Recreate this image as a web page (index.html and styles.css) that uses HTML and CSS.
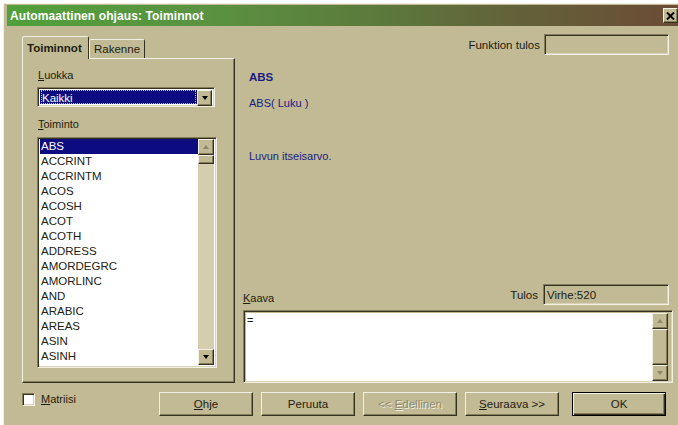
FILE: index.html
```html
<!DOCTYPE html>
<html lang="fi">
<head>
<meta charset="utf-8">
<title>Automaattinen ohjaus: Toiminnot</title>
<link rel="stylesheet" href="styles.css">
</head>
<body>
<div class="window">
  <div class="titlebar">
    <span class="title">Automaattinen ohjaus: Toiminnot</span>
    <span class="close" title="Sulje">
      <svg width="9" height="8" viewBox="0 0 9 8"><path d="M1 0.5 L8 7.5 M8 0.5 L1 7.5" stroke="#000" stroke-width="2" fill="none"/></svg>
    </span>
  </div>

  <div class="client">
    <div class="main">
      <!-- left side: tab control with the function category and function list -->
      <div class="leftcol">
        <div class="tabs">
          <div class="tab active">Toiminnot</div>
          <div class="tab">Rakenne</div>
        </div>
        <div class="panel">
          <div class="label"><u>L</u>uokka</div>
          <div class="combo">
            <div class="combo-value"><span class="focus">Kaikki</span></div>
            <div class="sbtn combo-btn"><span class="arrow-down"></span></div>
          </div>
          <div class="label label-gap"><u>T</u>oiminto</div>
          <div class="listbox">
            <ul class="items">
              <li class="selected">ABS</li>
              <li>ACCRINT</li>
              <li>ACCRINTM</li>
              <li>ACOS</li>
              <li>ACOSH</li>
              <li>ACOT</li>
              <li>ACOTH</li>
              <li>ADDRESS</li>
              <li>AMORDEGRC</li>
              <li>AMORLINC</li>
              <li>AND</li>
              <li>ARABIC</li>
              <li>AREAS</li>
              <li>ASIN</li>
              <li>ASINH</li>
            </ul>
            <div class="vscroll">
              <div class="sbtn"><span class="arrow-up dim"></span></div>
              <div class="thumb thumb-small"></div>
              <div class="track"></div>
              <div class="sbtn"><span class="arrow-down"></span></div>
            </div>
          </div>
        </div>
      </div>

      <!-- right side: function description, formula and result -->
      <div class="rightcol">
        <div class="result-row">
          <span>Funktion tulos</span>
          <div class="field result-field"></div>
        </div>
        <div class="info">
          <div class="fname">ABS</div>
          <div class="syntax">ABS( Luku )</div>
          <div class="desc">Luvun itseisarvo.</div>
        </div>
        <div class="formula-row">
          <span class="label"><u>K</u>aava</span>
          <span class="tulos">Tulos <span class="field tulos-field">Virhe:520</span></span>
        </div>
        <div class="formula">
          <div class="formula-text">=</div>
          <div class="vscroll">
            <div class="sbtn"><span class="arrow-up dim"></span></div>
            <div class="thumb thumb-big"></div>
            <div class="track"></div>
            <div class="sbtn"><span class="arrow-down dim"></span></div>
          </div>
        </div>
      </div>
    </div>

    <div class="footer">
      <label class="check"><span class="box"></span><span><u>M</u>atriisi</span></label>
      <div class="buttons">
        <button class="btn"><u>O</u>hje</button>
        <button class="btn">Peruuta</button>
        <button class="btn disabled">&lt;&lt; <u>E</u>dellinen</button>
        <button class="btn"><u>S</u>euraava &gt;&gt;</button>
        <button class="btn default">OK</button>
      </div>
    </div>
  </div>
</div>
</body>
</html>
```

FILE: styles.css
```css
* { box-sizing: border-box; }

html, body {
  margin: 0;
  padding: 0;
  background: #ffffff;
  overflow: hidden;
}

.window {
  margin: 3px 0 0 3px;
  height: 425px;
  border-left: 1px solid #f3f0e4;
  border-top: 1px solid #f3f0e4;
  padding: 1px 0 0 3px;
  background: #c1ba94;
  font-family: "Liberation Sans", Arial, sans-serif;
  font-size: 11px;
  color: #1e1d12;
}

u { text-decoration: underline; text-underline-offset: 1px; }

/* caption bar */
.titlebar {
  height: 21px;
  display: flex;
  align-items: center;
  justify-content: space-between;
  padding-left: 3px;
  background: linear-gradient(to right, #50a03b 0%, #5a9241 30%, #5c7a3c 55%, #63623a 75%, #6b4c35 100%);
}

.title {
  color: #ffffff;
  font-size: 12px;
  font-weight: bold;
  letter-spacing: 0.1px;
}

.close {
  width: 15px;
  height: 15px;
  display: flex;
  align-items: center;
  justify-content: center;
  background: #c1ba94;
  border: 1px solid;
  border-color: #f3f0e4 #35311f #35311f #f3f0e4;
  box-shadow: inset -1px -1px #857d5a;
}

/* dialog client area */
.client {
  padding: 8px 5px 0 15px;
}

.main {
  display: grid;
  grid-template-columns: 213px 1fr;
  column-gap: 8px;
}

.leftcol { padding-top: 2px; }

.tabs {
  display: flex;
  align-items: flex-end;
  height: 22px;
}

.tab {
  height: 19px;
  padding: 0 4px;
  display: flex;
  align-items: center;
  background: #c1ba94;
  border: 1px solid;
  border-bottom: none;
  border-color: #f3f0e4 #35311f transparent #f3f0e4;
  border-radius: 2px 2px 0 0;
  font-size: 11.5px;
}

.tab.active {
  height: 23px;
  margin-bottom: -1px;
  position: relative;
  z-index: 1;
  font-weight: bold;
  padding: 0 5px 0 4px;
  width: 67px;
}

.panel {
  height: 325px;
  border: 1px solid;
  border-color: #f3f0e4 #35311f #35311f #f3f0e4;
  box-shadow: inset -1px -1px #857d5a;
  padding: 9px 0 0 15px;
}

.label {
  line-height: 14px;
  height: 14px;
}

.label-gap { margin-top: 10px; }

/* sunken 3D edge shared by inputs */
.combo, .listbox, .formula, .field, .box {
  border: 1px solid;
  border-color: #857d5a #f3f0e4 #f3f0e4 #857d5a;
  box-shadow: inset 1px 1px #35311f, inset -1px -1px #d8d2b8;
}

.combo {
  margin: 5px 0 0 -1px;
  width: 178px;
  height: 20px;
  display: flex;
  padding: 2px;
  background: #ffffff;
}

.combo-value {
  flex: 1;
  background: #0c0c80;
  color: #ffffff;
  padding: 0 1px;
  display: flex;
}

.focus {
  flex: 1;
  outline: 1px dotted #d8d060;
  outline-offset: -1px;
  padding-left: 1px;
  line-height: 16px;
  font-size: 11.5px;
}

.combo-btn { width: 15px; height: 16px; }

.listbox {
  margin: 6px 0 0 -1px;
  width: 180px;
  height: 231px;
  display: flex;
  padding: 1px 2px 2px 2px;
  background: #ffffff;
}

.items {
  list-style: none;
  margin: 0;
  padding: 0;
  flex: 1;
}

.items li {
  height: 15px;
  line-height: 15px;
  padding-left: 1px;
  font-size: 11.5px;
  color: #222112;
}

.items li.selected {
  background: #0c0c80;
  color: #ffffff;
}

/* scroll bars */
.vscroll {
  width: 16px;
  display: flex;
  flex-direction: column;
  background: #d4ceae;
}

.sbtn {
  height: 16px;
  flex: none;
  display: flex;
  align-items: center;
  justify-content: center;
  background: #c1ba94;
  border: 1px solid;
  border-color: #f3f0e4 #35311f #35311f #f3f0e4;
  box-shadow: inset -1px -1px #857d5a;
}

.thumb {
  flex: none;
  background: #c1ba94;
  border: 1px solid;
  border-color: #f3f0e4 #35311f #35311f #f3f0e4;
  box-shadow: inset -1px -1px #857d5a;
}

.thumb-small { height: 9px; }
.thumb-big { height: 36px; }
.track { flex: 1; }

.arrow-down, .arrow-up {
  width: 0;
  height: 0;
  border-left: 3.5px solid transparent;
  border-right: 3.5px solid transparent;
}

.arrow-down { border-top: 4px solid #000000; }
.arrow-up { border-bottom: 4px solid #000000; }
.arrow-down.dim { border-top-color: #8f8868; }
.arrow-up.dim { border-bottom-color: #8f8868; }

/* right column */
.rightcol {
  display: flex;
  flex-direction: column;
}

.result-row {
  display: flex;
  justify-content: flex-end;
  align-items: center;
  gap: 4px;
  height: 21px;
}

.result-row span { font-size: 11.5px; }

.field {
  display: block;
  background: #c1ba94;
  height: 21px;
}

.result-field { width: 125px; margin-right: 4px; }

.info {
  padding-left: 6px;
  color: #1c1b84;
  line-height: 14px;
}

.fname { margin-top: 15px; font-weight: bold; font-size: 11.5px; }
.syntax { margin-top: 12px; }
.desc { margin-top: 39px; }

.formula-row {
  margin-top: auto;
  display: flex;
  justify-content: space-between;
  align-items: flex-end;
  height: 21px;
}

.tulos {
  display: flex;
  align-items: center;
  gap: 5px;
  font-size: 11.5px;
}

.tulos-field {
  width: 126px;
  margin-right: 4px;
  padding: 2px 0 0 3px;
  line-height: 16px;
  color: #222112;
}

.formula {
  margin-top: 5px;
  height: 73px;
  display: flex;
  padding: 2px 4px 1px 2px;
  background: #c1ba94;
}

.formula-text {
  flex: 1;
  background: #ffffff;
  padding: 1px 0 0 1px;
  line-height: 13px;
}

/* bottom row */
.footer {
  margin-top: 9px;
  display: flex;
  align-items: flex-start;
}

.check {
  width: 137px;
  display: flex;
  align-items: center;
  gap: 6px;
  margin-top: 1px;
  line-height: 13px;
}

.box {
  display: block;
  width: 13px;
  height: 13px;
  background: #ffffff;
}

.buttons {
  display: flex;
  gap: 8px;
}

.btn {
  width: 94px;
  height: 24px;
  padding: 0;
  font-family: inherit;
  font-size: 11.5px;
  color: #1e1d12;
  background: #c1ba94;
  border: 1px solid;
  border-color: #f3f0e4 #35311f #35311f #f3f0e4;
  box-shadow: inset -1px -1px #857d5a;
  border-radius: 0;
}

.btn.disabled {
  color: #8f8868;
  text-shadow: 1px 1px #f3f0e4;
}

.btn.default {
  margin-left: 5px;
  border: 1px solid #000000;
  box-shadow: inset 1px 1px #f3f0e4, inset -1px -1px #35311f, inset -2px -2px #857d5a;
}
```
